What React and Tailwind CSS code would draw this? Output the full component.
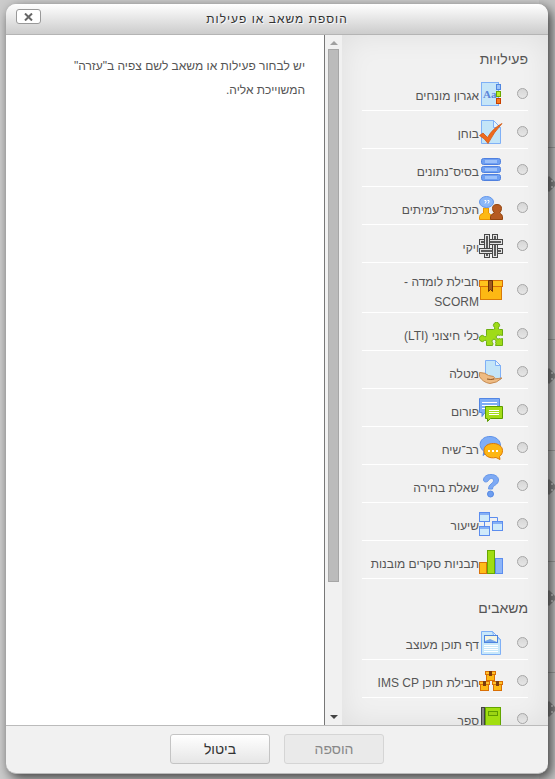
import React from "react";

const blue = "#5b8def";

const icons = {
  glossary: (
    <>
      <rect x="2.5" y=".5" width="17" height="23" fill="#c5e5f8" stroke="#7fb0f6" />
      <text x="4" y="16" fontSize="11" fontFamily="Liberation Serif" fontWeight="bold" fill="#5c86d8">Aa</text>
      <rect x="17.5" y="2.5" width="4" height="5" fill="#9cc3f8" stroke="#4f86e0" />
      <rect x="17.5" y="9.5" width="4" height="5" fill="#b8ee30" stroke="#6aa800" />
      <rect x="17.5" y="16.5" width="4" height="5" fill="#f57a20" stroke="#c84000" />
    </>
  ),
  quiz: (
    <>
      <path d="M2.5.5h12l7 7v16h-19z" fill="#c3e5f8" stroke="#7fb0f6" />
      <path d="M14.5.5v7h7z" fill="#e6f4fd" stroke="#7fb0f6" />
      <path d="M.5 15.5 4 13l4.500 4.500Q14 8 23 3.500 15 12 9 23.500q-3-5-8.500-8z" fill="#f06a1c" stroke="#d0560f" strokeWidth=".8" />
    </>
  ),
  database: (
    <>
      {[0, 8, 16].map((y) => (
        <g key={y}>
          <rect x="2.5" y={y + 0.5} width="19" height="6" rx="2" fill="#6e9ff2" stroke="#4f80df" />
          <rect x="6" y={y + 2} width="12" height="3" fill="#9cc1fa" />
        </g>
      ))}
    </>
  ),
  workshop: (
    <>
      <path d="M.5 23.500v-3q0-2 4-3.500v-5h5v5q3 1.500 3 3.500v3z" fill="#fdb913" stroke="#e89500" />
      <path d="M11.500 23.500v-3q0-2 4-3.500-2-2-2-4.500 0-4 4.500-4t4.500 4q0 2.500-2 4.500 3 1.500 3 3.500v3z" fill="#b65b22" stroke="#93450f" />
      <ellipse cx="7.500" cy="6" rx="7" ry="5.500" fill="#8ab7f8" stroke="#6396ea" />
      <path d="M5.500 4.500h1.500v1.500l-1 1.500M8.500 4.500H10V6L9 7.500" fill="none" stroke="#fff" />
    </>
  ),
  wiki: (
    <>
      {[
        [13, 0, 6, 24],
        [0, 5, 24, 6],
        [5, 0, 6, 24],
        [0, 14, 24, 6],
      ].map(([x, y, w, h]) => (
        <g key={`${x}-${y}`}>
          <rect x={x} y={y} width={w} height={h} fill="#484848" />
          <rect x={x + 1} y={y + 1} width={w - 2} height={h - 2} fill="#e4e4e4" />
          <rect x={x + 2} y={y + 2} width={w - 4} height={h - 4} fill="#5a5a5a" />
        </g>
      ))}
      <path d="M13 12h6v12h-6z" fill="#484848" />
      <path d="M14 12h4v11h-4z" fill="#e4e4e4" />
      <path d="M15 12h2v10h-2z" fill="#5a5a5a" />
      <path d="M12 5h8v6h-8z" fill="#484848" />
      <path d="M12 6h8v4h-8z" fill="#e4e4e4" />
      <path d="M12 7h8v2h-8z" fill="#5a5a5a" />
    </>
  ),
  scorm: (
    <>
      <rect x="1.500" y="5.500" width="21" height="16" fill="#fdb813" stroke="#d97b08" />
      <rect x=".5" y="2.500" width="23" height="6" fill="#ffc31c" stroke="#d97008" />
      <path d="M9.500 2.500h4v11l-2-2-2 2z" fill="#a05a20" stroke="#6b3207" />
    </>
  ),
  lti: (
    <path
      d="M7.500 7.500h7q2 0 1-2a3 3 0 1 1 4 0q-1 2 1 2h3v6q-2-1-3 0a2 2 0 1 0 0 3q1 1 3 0v7h-7q1-2 0-3a2 2 0 1 0-3 0q1 1 0 3h-6v-4q0-2-2-1a3 3 0 1 1 0-4q2 1 2-1z"
      fill="#9fdb18"
      stroke="#6dae12"
    />
  ),
  assign: (
    <>
      <path d="M6.500.5h10l5 5v14h-15z" fill="#c3e5f8" stroke="#7fb0f6" />
      <path d="M16.500.5v5h5z" fill="#e8f5fd" stroke="#7fb0f6" />
      <path d="M.5 12.500q6 0 9 3l5 1q2 1 0 2.500 5-.500 8.500-1-5 5-12 5.500-7-1-10.500-7z" fill="#eebb83" stroke="#c68a50" />
      <path d="M8 19q4 1 7 0" fill="none" stroke="#8a5424" />
    </>
  ),
  forum: (
    <>
      <path d="M.5.5h20v14H6l-3 4v-4H.500z" fill="#7fadf6" stroke="#5286e4" />
      <path d="M3 4.500h15M3 7.500h15M3 10.500h15" stroke="#fff" />
      <path d="M6.500 8.500h17v12h-12l-3 3v-3h-2z" fill="#a4dc18" stroke="#5c9c00" />
      <path d="M10 12.500h10M10 14.500h10M10 16.500h10" stroke="#fff" />
    </>
  ),
  chat: (
    <>
      <path d="M11 .5c6 0 10.500 4 10.500 9s-4.500 9-10.500 9l-4-1-3 2 1-4C-2 10 1 .5 11 .5z" fill="#7fadf6" stroke="#5c90e8" />
      <path d="M14.500 7.500c5 0 9 3 9 7 0 3-1 4-3 6l.5 3-4-2c-7 1.500-12-2-12-7s4.500-7 9.500-7z" fill="#fdb614" stroke="#dc7806" />
      <path d="M9 14h2v2H9zM13 14h2v2h-2zM17 14h2v2h-2z" fill="#fff" />
    </>
  ),
  choice: (
    <>
      <path d="M4.500 6C4.500 2.500 8 .5 12 .5s7.500 2 7.500 5.500c0 5-6 5-6 9h-4c0-5 5-5.500 5-8.500 0-3-4-2.500-5 0-1 2-5 2-5-.500z" fill="#7eaaf4" stroke="#6596e8" />
      <circle cx="11.500" cy="20" r="3" fill="#6d9ef0" stroke="#5588e3" />
    </>
  ),
  lesson: (
    <>
      <path d="M11 5.500h7.500V10M5.500 9v6" fill="none" stroke={blue} />
      {[
        [0, 0],
        [13, 9],
        [0, 14],
      ].map(([x, y]) => (
        <g key={`${x}-${y}`}>
          <rect x={x + 0.5} y={y + 0.5} width="10" height="9" fill="#cfeafa" stroke={blue} />
          <rect x={x + 1} y={y + 1} width="9" height="2" fill="#85b0f5" />
        </g>
      ))}
    </>
  ),
  survey: (
    <>
      <rect x=".5" y="12.500" width="7" height="11" fill="#ffbd18" stroke="#d9720a" />
      <rect x="8.500" y=".5" width="7" height="23" fill="#a0dd12" stroke="#67a802" />
      <rect x="16.500" y="8.500" width="7" height="15" fill="#8db5f8" stroke={blue} />
    </>
  ),
  page: (
    <>
      <path d="M2.500.5h11l8 8v15h-19z" fill="#c8e8fa" stroke="#7fb0f6" />
      <path d="M13.500.5 15 6l6.500 2.500z" fill="#e8f5fd" stroke="#7fb0f6" />
      <rect x="5.500" y="4.500" width="13" height="7" fill="#f5f5e0" stroke="#4e84df" />
      <path d="M6 10l5-2 7 3H6z" fill="#74a6ea" />
      <path d="M5 14.500h14M5 16.500h14M5 18.500h14M5 20.500h14" stroke="#fff" />
    </>
  ),
  ims: (
    <>
      {[
        [6, 2],
        [0, 12],
        [13, 12],
      ].map(([x, y]) => (
        <g key={`${x}-${y}`}>
          <rect x={x + 1.5} y={y + 2.5} width="8" height="7" fill="#fdb814" stroke="#d96f05" />
          <rect x={x + 0.5} y={y + 0.5} width="10" height="3" fill="#ffc229" stroke="#d96f05" />
          <rect x={x + 4} y={y} width="3" height="5" fill="#7b3c0e" />
        </g>
      ))}
    </>
  ),
  book: (
    <>
      <rect x="2" y="0" width="5" height="24" fill="#444" />
      <rect x="3" y="1" width="2" height="23" fill="#888" />
      <rect x="6.500" y=".5" width="15" height="23" fill="#a2de10" stroke="#62a500" />
      <rect x="9.500" y="4.500" width="9" height="4" fill="#9cd414" stroke="#5f9c00" />
    </>
  ),
};

const sections = [
  {
    title: "פעילויות",
    items: [
      ["glossary", "אגרון מונחים"],
      ["quiz", "בוחן"],
      ["database", "בסיס־נתונים"],
      ["workshop", "הערכת־עמיתים"],
      ["wiki", "ויקי"],
      ["scorm", "חבילת לומדה - SCORM"],
      ["lti", "כלי חיצוני (LTI)"],
      ["assign", "מטלה"],
      ["forum", "פורום"],
      ["chat", "רב־שיח"],
      ["choice", "שאלת בחירה"],
      ["lesson", "שיעור"],
      ["survey", "תבניות סקרים מובנות"],
    ],
  },
  {
    title: "משאבים",
    items: [
      ["page", "דף תוכן מעוצב"],
      ["ims", "חבילת תוכן IMS CP"],
      ["book", "ספר"],
    ],
  },
];

function Item({ id, label }) {
  return (
    <li className="border-b border-white">
      <label htmlFor={id} className="flex min-h-[37px] items-center pt-[5px]">
        <input
          type="radio"
          id={id}
          name="module"
          className="mb-0.5 size-[11px] shrink-0 appearance-none rounded-full border border-[#a6a6a6] bg-linear-to-b from-[#d6d6d6] to-[#e6e6e6]"
        />
        <svg viewBox="0 0 24 24" direction="ltr" className="mr-3.5 size-6 shrink-0" aria-hidden="true">
          {icons[id]}
        </svg>
        <span className="min-w-0 flex-1 pt-1 text-xs leading-5">{label}</span>
      </label>
    </li>
  );
}

function ScrollBar() {
  return (
    <div className="flex w-[17px] shrink-0 flex-col items-center bg-[#f1f1f1] py-1.5" aria-hidden="true">
      <svg viewBox="0 0 8 4" className="mb-1 h-1 w-2 shrink-0">
        <path d="M0 4 4 0l4 4z" fill="#a0a0a0" />
      </svg>
      <div className="w-[11px] grow-[532] border border-[#a6a6a6] bg-[#bbb]" />
      <div className="grow-[133]" />
      <svg viewBox="0 0 8 4" className="h-1 w-2 shrink-0">
        <path d="m0 0 4 4 4-4z" fill="#444" />
      </svg>
    </div>
  );
}

function Mover({ className }) {
  return (
    <div className={`border-t border-[#a0a0a0] pt-7 ${className}`}>
      <svg viewBox="-2 0 16 16" className="size-4" aria-hidden="true">
        <path d="m8 0 4 4h-2v2h2V4l4 4-4 4v-2h-2v2h2l-4 4-4-4h2v-2H4v2L0 8l4-4v2h2V4H4z" fill="#8a8a8a" />
      </svg>
    </div>
  );
}

export default function App() {
  return (
    <div
      dir="rtl"
      className="relative h-screen overflow-hidden bg-[#ccc] px-[7px] pt-1 pb-[5px] text-[#555] [font-family:'Liberation_Sans',Arial,sans-serif]"
    >
      <div className="absolute inset-y-0 right-0 w-4 bg-[#c4c4c4] pt-[147px]" aria-hidden="true">
        <Mover className="h-48" />
        <Mover className="h-[111px]" />
        <Mover className="h-[111px]" />
        <Mover className="h-[111px]" />
        <Mover className="h-[111px]" />
      </div>
      <div
        role="dialog"
        aria-labelledby="chooser-title"
        className="relative -ml-px flex h-full flex-col overflow-hidden rounded-[10px] border-b border-[#bbb] bg-[#f1f1f1] shadow-[3px_4px_12px_rgba(0,0,0,0.7)]"
      >
        <header className="relative flex h-[31px] shrink-0 items-center justify-center border-b border-[#b4b4b4] bg-linear-to-b from-white to-[#ccc]">
          <h1 id="chooser-title" className="text-xs tracking-[1px] text-[#333] [text-shadow:1px_1px_1px_#fff]">
            הוספת משאב או פעילות
          </h1>
          <button
            type="button"
            aria-label="סגירה"
            className="absolute top-[5px] left-[10px] flex h-[15px] w-[25px] items-center justify-center rounded-[3px] border border-[#999] bg-white"
          >
            <svg viewBox="0 0 9 8" className="h-2 w-[9px]" aria-hidden="true">
              <path d="m1 .5 7 7m0-7-7 7" stroke="#666" strokeWidth="2" />
            </svg>
          </button>
        </header>

        <form className="flex min-h-0 flex-1 flex-col">
          <div className="flex min-h-0 flex-1">
            <div className="w-[206px] shrink-0 overflow-hidden px-5 pt-3 shadow-[inset_0_0_30px_rgba(0,0,0,0.08)]">
              {sections.map((section) => (
                <section key={section.title} className="mb-[17px]">
                  <h2 className="mb-0.5 text-sm leading-6">{section.title}</h2>
                  <ul>
                    {section.items.map(([id, label]) => (
                      <Item key={id} id={id} label={label} />
                    ))}
                  </ul>
                </section>
              ))}
            </div>
            <ScrollBar />
            <div className="min-w-0 flex-1 border-r border-[#777] bg-white px-[19px] pt-[19px]">
              <p className="max-w-60 text-xs leading-6">יש לבחור פעילות או משאב לשם צפיה ב"עזרה" המשוייכת אליה.</p>
            </div>
          </div>

          <footer className="flex shrink-0 justify-center gap-3.5 border-t border-[#bbb] px-4 pt-2 pb-[9px]">
            <button
              type="submit"
              disabled
              className="h-[30px] w-[100px] rounded-[3px] border border-[#d5d5d5] bg-[#eaeaea] text-sm text-[#888]"
            >
              הוספה
            </button>
            <button
              type="button"
              className="h-[30px] w-[100px] rounded-[3px] border border-[#c4c4c4] bg-linear-to-b from-white to-[#e6e6e6] text-sm text-[#333]"
            >
              ביטול
            </button>
          </footer>
        </form>
      </div>
    </div>
  );
}
